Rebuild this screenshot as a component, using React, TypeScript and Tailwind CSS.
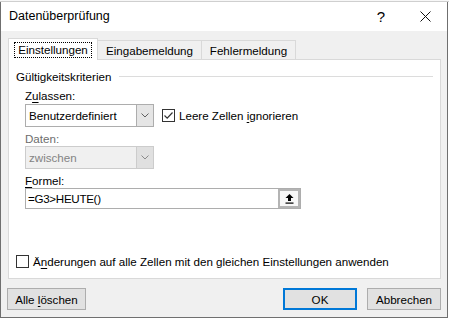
import React from 'react'

function Chevron({ color = '#606060' }: { color?: string }) {
  return (
    <svg width="8" height="5" viewBox="0 0 8 5" fill="none">
      <path d="M0.5 0.5 L4 4 L7.5 0.5" stroke={color} strokeWidth="1" />
    </svg>
  )
}

function Select({ value, disabled }: { value: string; disabled?: boolean }) {
  return (
    <div
      className={
        'flex h-[23px] w-[129px] border ' +
        (disabled ? 'border-[#cccccc] bg-[#f0f0f0] text-[#838383]' : 'border-[#adadad] bg-white text-black')
      }
    >
      <div className="flex flex-1 items-center pl-[3px]">{value}</div>
      <div
        className={
          'flex w-[17px] items-center justify-center border-l ' +
          (disabled ? 'border-[#cccccc] bg-[#e0e0e0]' : 'border-[#adadad] bg-[#e5e5e5]')
        }
      >
        <Chevron color={disabled ? '#8a8a8a' : '#606060'} />
      </div>
    </div>
  )
}

function Checkbox({ checked }: { checked?: boolean }) {
  return (
    <div className="flex h-[13px] w-[13px] items-center justify-center border border-[#333333] bg-white">
      {checked && (
        <svg width="11" height="11" viewBox="0 0 11 11" fill="none">
          <path d="M1.5 5.5 L4.2 8.2 L9.5 2.5" stroke="#333333" strokeWidth="1.2" />
        </svg>
      )}
    </div>
  )
}

function Button({ label, primary }: { label: React.ReactNode; primary?: boolean }) {
  return (
    <div
      className={
        'flex h-[22px] items-center justify-center bg-[#e1e1e1] ' +
        (primary ? 'border-2 border-[#0078d7]' : 'border border-[#adadad]')
      }
    >
      {label}
    </div>
  )
}

export default function App() {
  return (
    <div className="h-[319px] w-[449px] overflow-hidden bg-white font-['Liberation_Sans',Arial,sans-serif] text-[11.6px] leading-[15px] text-black">
      <div className="h-[2px] border-b border-[#cfcfcf] bg-[#f7f7f7]" />

      {/* Dialog window */}
      <div className="flex h-[316px] w-[448px] flex-col border-x border-b border-[#6f6f6f] border-t-0">

        {/* Title bar */}
        <div className="flex h-[29px] items-center bg-white pl-[8px]">
          <div className="flex-1 text-[12.5px]">Datenüberprüfung</div>
          <div className="mr-[35px] text-[15px] leading-none">?</div>
          <svg className="mr-[16px]" width="11" height="11" viewBox="0 0 11 11" fill="none">
            <path d="M0.5 0.5 L10.5 10.5 M10.5 0.5 L0.5 10.5" stroke="#111" strokeWidth="1" />
          </svg>
        </div>

        {/* Body */}
        <div className="flex flex-1 flex-col bg-[#f0f0f0] px-[7px] pt-[7px]">

          {/* Tabs */}
          <div className="flex h-[21px] items-end">
            <div className="relative z-10 -mb-px flex h-[22px] w-[90px] items-center justify-center border border-b-0 border-[#d9d9d9] bg-white">
              <span className="border border-dotted border-black px-[3px] leading-[14px]">Einstellungen</span>
            </div>
            <div className="flex h-[19px] w-[104px] items-center justify-center border border-b-0 border-l-0 border-[#d9d9d9]">
              Eingabemeldung
            </div>
            <div className="flex h-[19px] w-[94px] items-center justify-center border border-b-0 border-l-0 border-[#d9d9d9]">
              Fehlermeldung
            </div>
          </div>

          {/* Panel */}
          <div className="flex h-[220px] w-[433px] flex-col border border-[#d9d9d9] bg-white pl-[7px] pr-[7px] pt-[9px]">

            {/* Group header */}
            <div className="flex items-center">
              <span>Gültigkeitskriterien</span>
              <div className="ml-[8px] h-px flex-1 bg-[#dcdcdc]" />
            </div>

            <div className="flex flex-col pl-[9px]">
              <div className="mt-[4px]">
                Z<span className="underline underline-offset-2">u</span>lassen:
              </div>
              <div className="mt-px flex items-center">
                <Select value="Benutzerdefiniert" />
                <div className="ml-[8px] flex items-center gap-[4px]">
                  <Checkbox checked />
                  <span>
                    Leere Zellen <span className="underline underline-offset-2">i</span>gnorieren
                  </span>
                </div>
              </div>

              <div className="mt-[4px] text-[#6d6d6d]">Daten:</div>
              <Select value="zwischen" disabled />

              <div className="mt-[4px]">
                <span className="underline underline-offset-2">F</span>ormel:
              </div>
              <div className="flex h-[21px] w-[276px] border border-[#adadad] bg-white">
                <div className="flex flex-1 items-center pl-[2px] tracking-[-0.3px]">=G3&gt;HEUTE()</div>
                <div className="flex w-[22px] items-center justify-center border-2 border-[#b4b4b4] bg-[#f7f7f7]">
                  <svg width="9" height="10" viewBox="0 0 9 10" fill="#000">
                    <path d="M4.5 0 L8.5 4 L6 4 L6 7 L3 7 L3 4 L0.5 4 Z" />
                    <rect x="0.5" y="8.5" width="8" height="1.2" />
                  </svg>
                </div>
              </div>
            </div>

            <div className="mt-auto mb-[9px] flex items-center gap-[4px]">
              <Checkbox />
              <span>
                Ä<span className="underline underline-offset-2">n</span>derungen auf alle Zellen mit den gleichen Einstellungen anwenden
              </span>
            </div>
          </div>

          {/* Buttons */}
          <div className="mt-[9px] flex items-center">
            <div className="-ml-px w-[79px]">
              <Button
                label={
                  <span>
                    Alle <span className="underline underline-offset-2">l</span>öschen
                  </span>
                }
              />
            </div>
            <div className="ml-auto w-[74px]">
              <Button label="OK" primary />
            </div>
            <div className="ml-[10px] mr-[-1px] w-[74px]">
              <Button label="Abbrechen" />
            </div>
          </div>
        </div>
      </div>
    </div>
  )
}
